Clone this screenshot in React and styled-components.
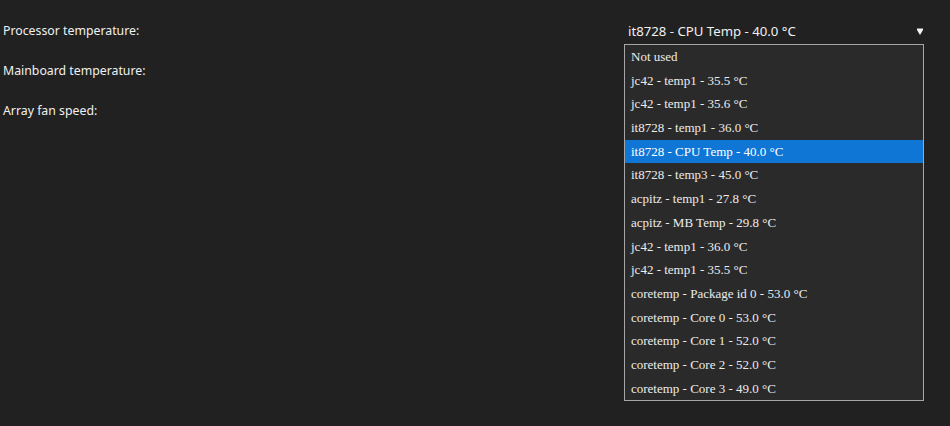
import React from "react";
import styled, { createGlobalStyle } from "styled-components";

const Global = createGlobalStyle`
  html, body { margin: 0; padding: 0; background: #212121; }
  body { font-family: "Noto Sans", "Open Sans", sans-serif; }
`;

const Page = styled.div`
  width: 950px;
  height: 426px;
  background: #212121;
  padding: 11px 0 0 3px;
  box-sizing: border-box;
`;

const Form = styled.div`
  display: grid;
  grid-template-columns: 621px 300px;
  grid-auto-rows: 40px;
  align-items: center;
`;

const Label = styled.div`
  font-size: 12.3px;
  color: #f0f0f0;
  line-height: 18px;
`;

const SelectWrap = styled.div`
  position: relative;
  height: 26px;
  display: flex;
  align-items: center;
  justify-content: space-between;
  padding: 0 1px 0 4px;
  font-size: 13.2px;
  color: #f0f0f0;
  box-sizing: border-box;
  ${(p) => (p.$open ? "z-index: 2;" : "")}
`;

const Arrow = styled.svg`
  width: 6px;
  height: 7px;
  display: block;
`;

const List = styled.ul`
  position: absolute;
  top: 100%;
  left: 0;
  width: 300px;
  box-sizing: border-box;
  margin: 0;
  padding: 0;
  list-style: none;
  background: #2a2a2a;
  border: 1px solid #a6a6a6;
`;

const Item = styled.li`
  height: 23.7px;
  line-height: 23.7px;
  padding-left: 6px;
  font-family: "Liberation Serif", "Times New Roman", Times, serif;
  font-size: 13px;
  color: ${(p) => (p.$active ? "#ffffff" : "#ececec")};
  background: ${(p) => (p.$active ? "#0f76d6" : "transparent")};
  white-space: nowrap;
`;

const options = [
  "Not used",
  "jc42 - temp1 - 35.5 °C",
  "jc42 - temp1 - 35.6 °C",
  "it8728 - temp1 - 36.0 °C",
  "it8728 - CPU Temp - 40.0 °C",
  "it8728 - temp3 - 45.0 °C",
  "acpitz - temp1 - 27.8 °C",
  "acpitz - MB Temp - 29.8 °C",
  "jc42 - temp1 - 36.0 °C",
  "jc42 - temp1 - 35.5 °C",
  "coretemp - Package id 0 - 53.0 °C",
  "coretemp - Core 0 - 53.0 °C",
  "coretemp - Core 1 - 52.0 °C",
  "coretemp - Core 2 - 52.0 °C",
  "coretemp - Core 3 - 49.0 °C",
];

const selected = 4;

export default function App() {
  return (
    <Page>
      <Global />
      <Form>
        <Label>Processor temperature:</Label>
        <SelectWrap $open>
          <span>{options[selected]}</span>
          <Arrow viewBox="0 0 6 7">
            <path d="M0 0.5 H6 V2 L3 7 L0 2 Z" fill="#f0f0f0" />
          </Arrow>
          <List>
            {options.map((o, i) => (
              <Item key={i} $active={i === selected}>
                {o}
              </Item>
            ))}
          </List>
        </SelectWrap>
        <Label>Mainboard temperature:</Label>
        <div />
        <Label>Array fan speed:</Label>
        <div />
      </Form>
    </Page>
  );
}
